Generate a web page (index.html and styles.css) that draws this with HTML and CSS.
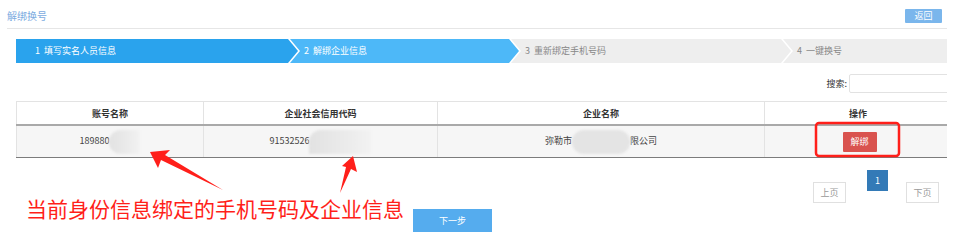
FILE: index.html
```html
<!DOCTYPE html>
<html lang="zh-CN">
<head>
<meta charset="UTF-8">
<meta name="viewport" content="width=device-width, initial-scale=1.0">
<title>解绑换号</title>
<link rel="stylesheet" href="styles.css">
</head>
<body>
<div class="page">
    <div class="topbar">
        <span class="title">解绑换号</span>
        <button class="btn-back">返回</button>
    </div>
    <div class="content">
        <div class="steps">
            <div class="step step-1">1&nbsp; 填写实名人员信息</div>
            <div class="step step-2">2&nbsp; 解绑企业信息</div>
            <div class="step step-3">3&nbsp; 重新绑定手机号码</div>
            <div class="step step-4">4&nbsp; 一键换号</div>
        </div>
        <div class="search-row">
            <label for="search">搜索:</label>
            <input type="text" id="search" class="search-input">
        </div>
        <table class="grid">
            <thead>
                <tr>
                    <th class="col-1">账号名称</th>
                    <th class="col-2">企业社会信用代码</th>
                    <th class="col-3">企业名称</th>
                    <th class="col-4">操作</th>
                </tr>
            </thead>
            <tbody>
                <tr>
                    <td>189880<span class="mask mask-1"></span></td>
                    <td>91532526<span class="mask mask-2"></span></td>
                    <td>弥勒市<span class="mask mask-3"></span>限公司</td>
                    <td><button class="btn-unbind">解绑</button></td>
                </tr>
            </tbody>
        </table>
        <div class="footer">
            <div class="note-row">
                <p class="note">当前身份信息绑定的手机号码及企业信息</p>
                <button class="btn-next">下一步</button>
            </div>
            <div class="pager">
                <button class="page-btn">上页</button>
                <button class="page-btn active">1</button>
                <button class="page-btn">下页</button>
            </div>
        </div>
    </div>
</div>
<!-- red annotation marks drawn over the page -->
<svg class="marks" width="956" height="241" viewBox="0 0 956 241">
    <rect x="816" y="123" width="83" height="33" rx="3" fill="none" stroke="#ff1f1a" stroke-width="2.5"/>
    <polygon points="150,152 170,150 165,155 223,190 161,160 158,168" fill="#ff1f1a"/>
    <polygon points="353,156 357,172 351,169 340,193 346,167 342,166" fill="#ff1f1a"/>
</svg>
</body>
</html>
```

FILE: styles.css
```css
body {
    margin: 0;
    position: relative;
    width: 956px;
    height: 241px;
    overflow: hidden;
    background: #fff;
    font-family: "Noto Sans CJK SC", "Liberation Sans", sans-serif;
    color: #333;
}
button {
    font-family: inherit;
    border: none;
    padding: 0;
    cursor: pointer;
}
.page {
    width: 940px;
    padding-left: 7px;
}
.topbar {
    display: flex;
    justify-content: space-between;
    align-items: flex-start;
    padding-top: 9px;
    height: 19px;
    border-bottom: 1px solid #e6e6e6;
}
.title {
    font-size: 10px;
    line-height: 13px;
    color: #7cabdf;
}
.btn-back {
    width: 37px;
    height: 14px;
    margin-right: 5px;
    background: #7ab6ec;
    color: #fff;
    font-size: 9px;
    line-height: 14px;
    border-radius: 1px;
}
.content {
    margin-left: 9px;
    width: 931px;
    overflow: hidden;
}

/* step bar */
.steps {
    display: flex;
    height: 24px;
    margin-top: 10px;
    overflow: hidden;
}
.step {
    flex: none;
    height: 24px;
    line-height: 24px;
    font-size: 9px;
    padding-left: 14px;
    box-sizing: border-box;
    margin-left: -8px;
    background: #eeeeee;
    color: #888;
    clip-path: polygon(0 0, calc(100% - 10px) 0, 100% 50%, calc(100% - 10px) 100%, 0 100%, 10px 50%);
}
.step-1 {
    width: 282px;
    margin-left: 0;
    padding-left: 19px;
    background: #2aa3ed;
    color: #fff;
    clip-path: polygon(0 0, calc(100% - 10px) 0, 100% 50%, calc(100% - 10px) 100%, 0 100%);
}
.step-2 {
    width: 229px;
    background: #4db8f8;
    color: #fff;
}
.step-3 {
    width: 280px;
}
.step-4 {
    width: 200px;
}

/* search */
.search-row {
    display: flex;
    justify-content: flex-end;
    align-items: center;
    margin-top: 11px;
    height: 19px;
}
.search-row label {
    font-size: 9px;
    margin-right: 2px;
}
.search-input {
    width: 110px;
    height: 19px;
    box-sizing: border-box;
    margin-right: -12px;
    border: 1px solid #e2e2e2;
    border-radius: 2px;
    outline: none;
}

/* table */
.grid {
    width: 931px;
    margin-top: 8px;
    border-collapse: collapse;
    table-layout: fixed;
    font-size: 9px;
}
.col-1 { width: 186px; }
.col-2 { width: 233px; }
.col-3 { width: 326px; }
.col-4 { width: 186px; }
.grid th {
    height: 22px;
    padding: 0;
    font-weight: bold;
    color: #333;
    border: 1px solid #e3e3e3;
    border-bottom: 2px solid #a9a9a9;
}
.grid td {
    height: 31px;
    padding: 0;
    text-align: center;
    color: #444;
    background: #f6f6f6;
    border-left: 1px solid #e3e3e3;
    border-right: 1px solid #e3e3e3;
    border-bottom: 1px solid #7c7c7c;
}
.mask {
    display: inline-block;
    vertical-align: middle;
    height: 24px;
    background: linear-gradient(90deg, #e2e2e2, #ebebeb 60%, #f2f2f2);
    filter: blur(1px);
}
.mask-1 {
    width: 31px;
    border-radius: 12px 0 0 12px;
}
.mask-2 {
    width: 62px;
    border-radius: 12px 0 0 0;
}
.mask-3 {
    width: 58px;
    border-radius: 12px;
    background: #e4e4e4;
}
.btn-unbind {
    width: 34px;
    height: 20px;
    background: #d9534f;
    color: #fff;
    font-size: 9px;
    border-radius: 1px;
    margin-left: 3px;
}

/* footer */
.footer {
    display: flex;
    justify-content: space-between;
    align-items: flex-start;
}
.note-row {
    display: flex;
    align-items: flex-start;
    margin-top: 38px;
    margin-left: 10px;
}
.note {
    margin: 0;
    font-size: 21px;
    line-height: 24px;
    color: #ff1f1a;
}
.btn-next {
    width: 79px;
    height: 23px;
    margin-top: 13px;
    margin-left: 9px;
    background: #55acee;
    color: #fff;
    font-size: 9px;
}
.pager {
    display: flex;
    align-items: flex-start;
    margin-top: 12px;
    margin-right: 8px;
}
.page-btn {
    width: 33px;
    height: 21px;
    margin-top: 12px;
    box-sizing: border-box;
    border: 1px solid #e0e0e0;
    background: #fff;
    color: #999;
    font-size: 9px;
}
.page-btn.active {
    width: 21px;
    margin: 0 18px 0 21px;
    border: none;
    background: #337ab7;
    color: #fff;
}
.marks {
    position: absolute;
    top: 0;
    left: 0;
    pointer-events: none;
}
```
